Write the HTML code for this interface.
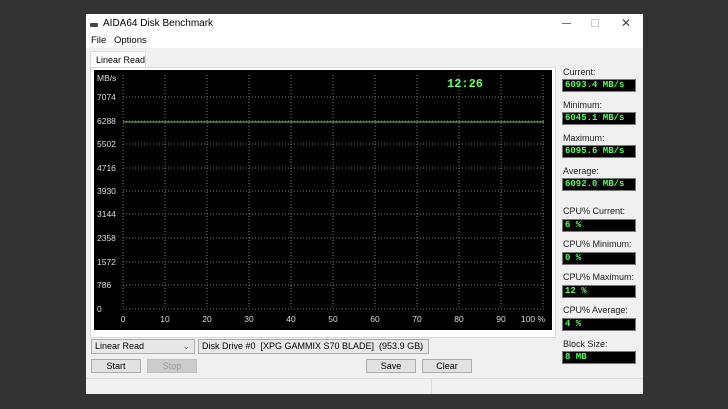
<!DOCTYPE html>
<html><head><meta charset="utf-8"><style>
*{margin:0;padding:0;box-sizing:border-box}
body{width:728px;height:409px;background:#333;position:relative;overflow:hidden;font-family:"Liberation Sans",sans-serif;font-size:9px;color:#000}
.win{position:absolute;left:86px;top:14px;width:557px;height:380px;background:#f0f0f0}
.abs{position:absolute;white-space:nowrap}
.title{left:0;top:0;width:557px;height:20px;background:#fff}
.menu{left:0;top:20px;width:557px;height:14px;background:#fff}
.lbl{position:absolute;left:477px;font-size:9px;color:#222}
.box{position:absolute;left:476px;width:74px;height:13px;background:#000;border:1px solid #777;color:#5f5;font-family:"Liberation Mono",monospace;font-weight:bold;font-size:9px;line-height:11px;padding-left:2px}
.btn{position:absolute;height:14px;background:#e1e1e1;border:1px solid #adadad;text-align:center;line-height:12px;font-size:9px}
.sel{position:absolute;height:15px;background:#e8e8e8;border:1px solid #adadad;line-height:13px;padding-left:3px;font-size:9px;white-space:nowrap}
.sel span{position:absolute;right:4px;top:0;color:#666}
</style></head><body>
<div class="win">
 <div class="abs title">
  <div class="abs" style="left:4px;top:9px;width:8px;height:4px;background:#444;border-radius:1px"></div>
  <div class="abs" style="left:17px;top:4px;font-size:10px">AIDA64 Disk Benchmark</div>
  <div class="abs" style="left:476px;top:9px;width:9px;height:1px;background:#777"></div>
  <div class="abs" style="left:505px;top:5px;width:8px;height:8px;border:1px solid #ccc"></div>
  <div class="abs" style="left:535px;top:2px;font-size:12px;color:#444">✕</div>
 </div>
 <div class="abs menu"><span class="abs" style="left:5px;top:1px;font-size:9.5px">File</span><span class="abs" style="left:28px;top:1px;font-size:9.5px">Options</span></div>
 <div class="abs" style="left:4px;top:37px;width:56px;height:17px;background:#fff;border:1px solid #d9d9d9;border-bottom:none;font-size:9px;padding:3px 0 0 5px">Linear Read</div>
 <div class="abs" style="left:4px;top:53px;width:466px;height:271px;background:#fff;border:1px solid #d9d9d9"></div>
 <svg class="abs" style="left:8px;top:56px" width="458" height="260">
  <rect width="458" height="260" fill="#000"/>
  <g stroke="#777" stroke-width="1" stroke-dasharray="1,2">
   <line x1="29" y1="27" x2="451" y2="27"/><line x1="29" y1="51" x2="451" y2="51"/><line x1="29" y1="74" x2="451" y2="74"/><line x1="29" y1="98" x2="451" y2="98"/><line x1="29" y1="121" x2="451" y2="121"/><line x1="29" y1="144" x2="451" y2="144"/><line x1="29" y1="168" x2="451" y2="168"/><line x1="29" y1="192" x2="451" y2="192"/><line x1="29" y1="215" x2="451" y2="215"/><line x1="29" y1="239" x2="451" y2="239"/>
   <line x1="29" y1="5" x2="29" y2="239"/><line x1="71" y1="5" x2="71" y2="239"/><line x1="113" y1="5" x2="113" y2="239"/><line x1="155" y1="5" x2="155" y2="239"/><line x1="197" y1="5" x2="197" y2="239"/><line x1="239" y1="5" x2="239" y2="239"/><line x1="281" y1="5" x2="281" y2="239"/><line x1="323" y1="5" x2="323" y2="239"/><line x1="365" y1="5" x2="365" y2="239"/><line x1="407" y1="5" x2="407" y2="239"/><line x1="449" y1="5" x2="449" y2="239"/>
  </g>
  <line x1="29" y1="52" x2="450" y2="52" stroke="#4a8a3a" stroke-width="1.5"/>
  <g fill="#ddd" font-size="8.5" font-family="Liberation Sans,sans-serif">
   <text x="3" y="11">MB/s</text><text x="3" y="30">7074</text><text x="3" y="54">6288</text><text x="3" y="77">5502</text><text x="3" y="101">4716</text><text x="3" y="124">3930</text><text x="3" y="147">3144</text><text x="3" y="171">2358</text><text x="3" y="195">1572</text><text x="3" y="218">786</text><text x="3" y="242">0</text>
   <g text-anchor="middle"><text x="29" y="252">0</text><text x="71" y="252">10</text><text x="113" y="252">20</text><text x="155" y="252">30</text><text x="197" y="252">40</text><text x="239" y="252">50</text><text x="281" y="252">60</text><text x="323" y="252">70</text><text x="365" y="252">80</text><text x="407" y="252">90</text><text x="439" y="252">100 %</text></g>
  </g>
  <text x="353" y="17" fill="#6f6" font-size="12" font-weight="bold" font-family="Liberation Mono,monospace">12:26</text>
 </svg>
 <div class="lbl" style="top:53px">Current:</div><div class="box" style="top:65px">6093.4 MB/s</div>
 <div class="lbl" style="top:86px">Minimum:</div><div class="box" style="top:98px">6045.1 MB/s</div>
 <div class="lbl" style="top:119px">Maximum:</div><div class="box" style="top:131px">6095.6 MB/s</div>
 <div class="lbl" style="top:152px">Average:</div><div class="box" style="top:164px">6092.0 MB/s</div>
 <div class="lbl" style="top:192px">CPU% Current:</div><div class="box" style="top:205px">6 %</div>
 <div class="lbl" style="top:225px">CPU% Minimum:</div><div class="box" style="top:238px">0 %</div>
 <div class="lbl" style="top:258px">CPU% Maximum:</div><div class="box" style="top:271px">12 %</div>
 <div class="lbl" style="top:291px">CPU% Average:</div><div class="box" style="top:304px">4 %</div>
 <div class="lbl" style="top:325px">Block Size:</div><div class="box" style="top:337px">8 MB</div>
 <div class="sel" style="left:5px;top:325px;width:104px">Linear Read<span>⌄</span></div>
 <div class="sel" style="left:112px;top:325px;width:231px">Disk Drive #0&nbsp; [XPG GAMMIX S70 BLADE]&nbsp; (953.9 GB)<span>⌄</span></div>
 <div class="btn" style="left:5px;top:345px;width:50px">Start</div>
 <div class="btn" style="left:61px;top:345px;width:50px;color:#999;background:#ccc;border-color:#bfbfbf">Stop</div>
 <div class="btn" style="left:280px;top:345px;width:50px">Save</div>
 <div class="btn" style="left:336px;top:345px;width:50px">Clear</div>
 <div class="abs" style="left:0;top:364px;width:557px;height:1px;background:#dcdcdc"></div>
 <div class="abs" style="left:345px;top:365px;width:1px;height:15px;background:#dcdcdc"></div>
</div>
</body></html>
